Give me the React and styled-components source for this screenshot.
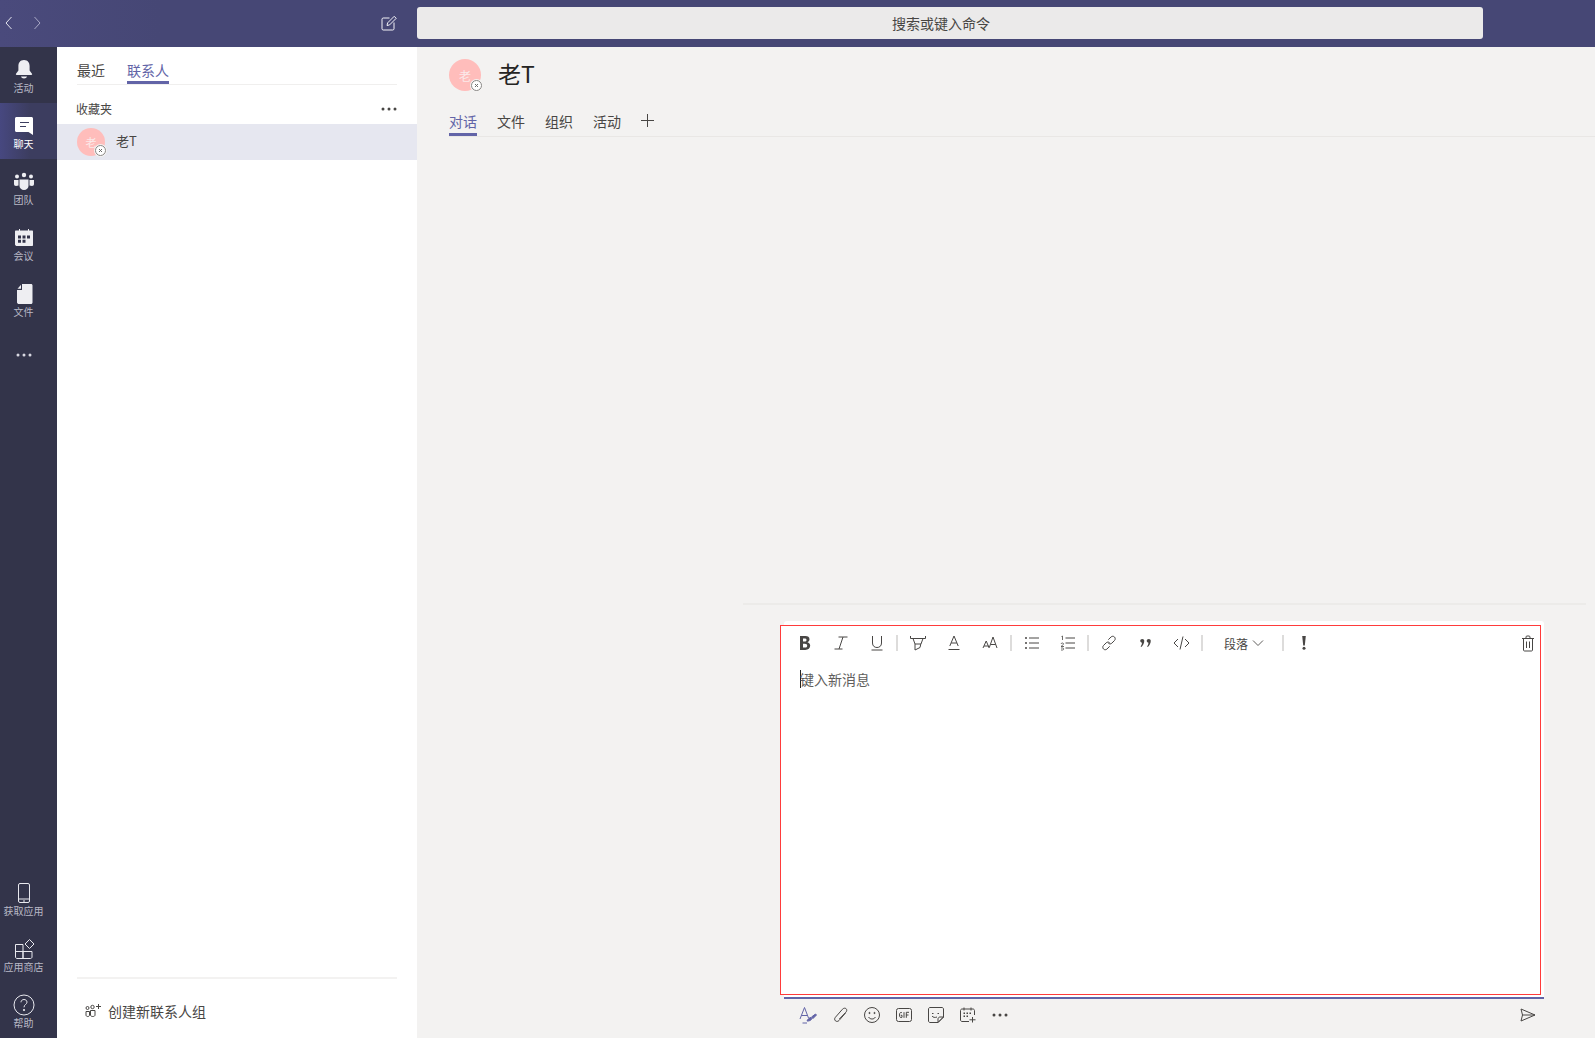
import React from "react";
import styled, { createGlobalStyle } from "styled-components";

const Global = createGlobalStyle`
  html, body { margin: 0; padding: 0; height: 100%; overflow: hidden; }
  body {
    font-family: "Noto Sans CJK SC", "Liberation Sans", sans-serif;
    color: #484644;
  }
  * { box-sizing: border-box; }
`;

const Shell = styled.div`
  width: 1595px;
  height: 1038px;
  display: grid;
  grid-template-columns: 57px 360px 1fr;
  grid-template-rows: 47px 1fr;
  background: #f3f2f1;
`;

const TitleBar = styled.header`
  grid-column: 1 / 4;
  display: flex;
  align-items: center;
  padding-bottom: 1px;
  background: linear-gradient(90deg, #4a4a7c 0, #464775 160px);
`;

const NavArrows = styled.div`
  width: 377px;
  display: flex;
  align-items: center;
  padding-left: 4px;
  gap: 18px;
`;

const ComposeSlot = styled.div`
  width: 40px;
  display: flex;
  justify-content: flex-start;
  padding-left: 4px;
`;

const SearchBox = styled.div`
  width: 1066px;
  height: 32px;
  padding-right: 18px;
  border-radius: 3px;
  background: #ebeaea;
  display: flex;
  align-items: center;
  justify-content: center;
  font-size: 14px;
  color: #484644;
`;

const Rail = styled.nav`
  background: #33344a;
  display: flex;
  flex-direction: column;
  justify-content: space-between;
`;

const RailGroup = styled.div`
  display: flex;
  flex-direction: column;
`;

const RailItem = styled.div`
  height: 56px;
  display: flex;
  flex-direction: column;
  align-items: center;
  padding: 12px 10px 0 0;
  color: ${(p) => (p.$active ? "#ffffff" : "#b9b9c6")};
  background: ${(p) => (p.$active ? "linear-gradient(90deg, #474880 0, #3c3d5f 30px)" : "transparent")};
  font-size: 10px;
  line-height: 14px;
  white-space: nowrap;
  svg { display: block; flex: none; }
`;

const RailMore = styled(RailItem)`
  justify-content: center;
  padding-top: 0;
`;

const ListPanel = styled.aside`
  background: #ffffff;
  display: flex;
  flex-direction: column;
`;

const PanelTabs = styled.div`
  margin: 0 20px;
  height: 38px;
  display: flex;
  gap: 22px;
  border-bottom: 1px solid #f0efee;
`;

const PanelTab = styled.div`
  height: 37px;
  padding-top: 13px;
  font-size: 14px;
  line-height: 20px;
  color: ${(p) => (p.$active ? "#6264a7" : "#484644")};
  border-bottom: 3px solid ${(p) => (p.$active ? "#6264a7" : "transparent")};
`;

const SectionHead = styled.div`
  height: 39px;
  padding: 8px 20px 0 19px;
  display: flex;
  align-items: center;
  justify-content: space-between;
  font-size: 12px;
  color: #484644;
`;

const ContactRow = styled.div`
  height: 36px;
  padding-left: 20px;
  display: flex;
  align-items: center;
  gap: 11px;
  background: #e6e7f0;
  font-size: 13px;
  line-height: 18px;
  color: #484644;
`;

const ContactName = styled.span`
  margin-top: -2px;
`;

const Avatar = styled.div`
  position: relative;
  flex: none;
  width: ${(p) => p.$size}px;
  height: ${(p) => p.$size}px;
  border-radius: 50%;
  background: #ffbdbb;
  color: #fbeaea;
  font-size: ${(p) => (p.$size > 30 ? 12 : 11)}px;
  display: flex;
  align-items: center;
  justify-content: center;
`;

const StatusBadge = styled.svg`
  position: absolute;
  right: -2px;
  bottom: -1px;
  width: 13px;
  height: 13px;
`;

const PanelFill = styled.div`
  flex: 1;
`;

const PanelFooter = styled.div`
  margin: 0 20px;
  height: 61px;
  border-top: 2px solid #f3f2f1;
  padding: 4px 0 0 8px;
  display: flex;
  align-items: center;
  gap: 6px;
  font-size: 14px;
  color: #484644;
`;

const Main = styled.main`
  display: flex;
  flex-direction: column;
  min-width: 0;
`;

const ChatHead = styled.div`
  margin-left: 32px;
  height: 90px;
  border-bottom: 1px solid #e9e7e5;
  display: flex;
  flex-direction: column;
`;

const ChatTitle = styled.div`
  height: 58px;
  padding-top: 12px;
  display: flex;
  align-items: flex-start;
  gap: 17px;
`;

const ChatName = styled.div`
  font-size: 23px;
  line-height: 29px;
  color: #252423;
`;

const ChatTabs = styled.div`
  height: 31px;
  display: flex;
  gap: 20px;
  align-items: flex-start;
`;

const ChatTab = styled.div`
  height: 31px;
  padding-top: 6px;
  font-size: 14px;
  line-height: 20px;
  color: ${(p) => (p.$active ? "#6264a7" : "#484644")};
  border-bottom: 3px solid ${(p) => (p.$active ? "#6264a7" : "transparent")};
`;

const AddTab = styled.svg`
  margin: 8px 0 0 -1px;
  width: 15px;
  height: 15px;
`;

const ChatBody = styled.div`
  flex: 1;
`;

const Composer = styled.section`
  margin: 0 9px 0 326px;
  border-top: 2px solid #ecebe9;
  padding: 16px 42px 0 41px;
`;

const Editor = styled.div`
  position: relative;
  height: 378px;
  background: #ffffff;
  border-radius: 3px 3px 0 0;
  border-bottom: 2px solid #6264a7;
`;

const RedFrame = styled.div`
  position: absolute;
  top: 4px;
  left: -4px;
  right: 3px;
  bottom: 2px;
  border: 1px solid #ff3b3b;
  background: #ffffff;
`;

const FormatBar = styled.div`
  position: relative;
  height: 44px;
  padding-left: 3px;
  display: flex;
  align-items: center;
`;

const ToolBtn = styled.div`
  flex: none;
  width: ${(p) => p.$w || 36}px;
  height: 24px;
  display: flex;
  align-items: center;
  justify-content: center;
  color: #484644;
`;

const TrashBtn = styled(ToolBtn)`
  margin-left: auto;
  width: 32px;
`;

const Sep = styled.div`
  flex: none;
  width: 2px;
  height: 16px;
  margin: 0 2px;
  background: #dddcdb;
`;

const ParaSelect = styled(ToolBtn)`
  width: 75px;
  padding-left: 3px;
  font-size: 12px;
  gap: 4px;
`;

const Draft = styled.div`
  position: relative;
  margin: 5px 0 0 16px;
  height: 18px;
  font-size: 14px;
  line-height: 18px;
  text-indent: -1px;
  color: #605e5c;
  border-left: 1px solid #252423;
`;

const SendBar = styled.div`
  height: 39px;
  padding-left: 8px;
  display: flex;
  align-items: center;
  padding-bottom: 8px;
`;

const SendBtn = styled(ToolBtn)`
  width: 32px;
`;

const SendLast = styled(SendBtn)`
  margin-left: auto;
`;

const Line = ({ children, w = 16, h = 16, vb, sw = 1, color = "currentColor" }) => (
  <svg width={w} height={h} viewBox={vb || `0 0 ${w} ${h}`} fill="none" stroke={color} strokeWidth={sw}>
    {children}
  </svg>
);

const Dots = ({ color = "#484644", r = 1.5 }) => (
  <svg width="16" height="4" viewBox="0 0 16 4" fill={color}>
    <circle cx="2" cy="2" r={r} />
    <circle cx="8" cy="2" r={r} />
    <circle cx="14" cy="2" r={r} />
  </svg>
);

const Badge = () => (
  <StatusBadge viewBox="0 0 13 13">
    <circle cx="6.5" cy="6.5" r="6.5" fill="#f3f2f1" />
    <circle cx="6.5" cy="6.5" r="5" fill="#fff" stroke="#8a8886" strokeWidth="1" />
    <path d="M5 5l3 3M8 5l-3 3" stroke="#6e6d6c" strokeWidth="1" />
  </StatusBadge>
);

const railTop = [
  {
    label: "活动",
    icon: (
      <svg width="20" height="22" viewBox="0 0 20 22" fill="#eeeef2">
        <path d="M10 1c-4 0-5.6 3-5.6 6v4.5L2 14.8c-.4.6 0 1.2.6 1.2h14.8c.6 0 1-.6.6-1.2l-2.4-3.3V7c0-3-1.6-6-5.6-6z" />
        <path d="M7 17.5h6c-.3 1.3-1.5 2-3 2s-2.7-.7-3-2z" />
      </svg>
    ),
  },
  {
    label: "聊天",
    active: true,
    icon: (
      <svg width="20" height="22" viewBox="0 0 20 22">
        <path d="M1 3.5C1 2.7 1.7 2 2.500 2h15c.8 0 1.500.7 1.500 1.500V20l-4.500-3H2.500C1.700 17 1 16.300 1 15.500z" fill="#ffffff" />
        <path d="M6 7.500h9M6 11.500h6" stroke="#3c3d5f" strokeWidth="1.200" />
      </svg>
    ),
  },
  {
    label: "团队",
    icon: (
      <svg width="22" height="22" viewBox="0 0 22 22" fill="#eeeef2">
        <circle cx="4" cy="5.500" r="2" />
        <circle cx="11" cy="4" r="2.200" />
        <circle cx="18" cy="5.500" r="2" />
        <path d="M1 9h4.500v5.500L3 15c-1.300 0-2-1-2-2zM16.500 9H21v4c0 1-.7 2-2 2l-2.500-.5z" />
        <path d="M6.500 8.500h9v6.500c0 2.200-2 4-4.500 4s-4.500-1.800-4.500-4z" />
      </svg>
    ),
  },
  {
    label: "会议",
    icon: (
      <svg width="20" height="22" viewBox="0 0 20 22">
        <path d="M2 3.500h16c.6 0 1 .4 1 1V18c0 .6-.4 1-1 1H3c-1 0-2-.6-2-1.500v-13c0-.6.400-1 1-1z" fill="#eeeef2" />
        <path d="M5.500 2v2M14.500 2v2" stroke="#eeeef2" strokeWidth="1" />
        <path d="M4 8.500h3v3H4zM8.500 8.500h3v3h-3zM13 8.500h3v3h-3zM4 12.700h3v3H4zM8.500 12.700h3v3h-3z" fill="#33344a" />
      </svg>
    ),
  },
  {
    label: "文件",
    icon: (
      <svg width="20" height="22" viewBox="0 0 20 22" fill="#eeeef2">
        <path d="M8 1h9c1 0 1.500.7 1.500 1.500v17c0 .8-.6 1.500-1.500 1.500H5c-1 0-2-.7-2-1.500V7h5z" />
        <path d="M3.500 5.800 7 1.800v4z" />
      </svg>
    ),
  },
];

const railBottom = [
  {
    label: "获取应用",
    icon: (
      <svg width="20" height="22" viewBox="0 0 20 22" fill="none" stroke="#e8e8ee" strokeWidth="1">
        <rect x="4.500" y="1.500" width="11" height="19" rx="1.500" />
        <path d="M4.500 17h11M9 19h2" />
      </svg>
    ),
  },
  {
    label: "应用商店",
    icon: (
      <svg width="22" height="22" viewBox="0 0 22 22" fill="none" stroke="#e8e8ee" strokeWidth="1">
        <path d="M2.500 6.500h7.500v14H4c-.8 0-1.500-.7-1.500-1.500zM10 13.500h9V19c0 .8-.7 1.500-1.500 1.500H10zM2.500 13.500H10" />
        <path d="M16.500 1.500l4.500 4.500-4.500 4.500L12 6z" />
      </svg>
    ),
  },
  {
    label: "帮助",
    icon: (
      <svg width="22" height="22" viewBox="0 0 22 22" fill="none" stroke="#e8e8ee" strokeWidth="1">
        <circle cx="11" cy="11" r="10" />
        <path d="M8 8.300c0-1.700 1.300-2.800 3-2.800s3 1.100 3 2.600c0 2.400-3 2.300-3 5.200" />
        <circle cx="11" cy="16" r=".7" fill="#e8e8ee" />
      </svg>
    ),
  },
];

const App = () => (
  <>
    <Global />
    <Shell>
      <TitleBar>
        <NavArrows>
          <Line w={10} h={16}>
            <path d="M7.500 2 2 8l5.500 6" stroke="#e4e4ee" />
          </Line>
          <Line w={10} h={16}>
            <path d="M2.500 2 8 8l-5.500 6" stroke="#a9a9c6" />
          </Line>
        </NavArrows>
        <ComposeSlot>
          <Line w={16} h={16}>
            <path d="M8.500 3H2.200C1.500 3 1 3.500 1 4.200v9.600c0 .7.500 1.200 1.200 1.200h9.600c.7 0 1.200-.5 1.200-1.200V7.500" stroke="#f3f3f8" />
            <path d="M6 10.500l.6-2.600L13.200 1.300l2 2-6.600 6.600z" stroke="#f3f3f8" />
          </Line>
        </ComposeSlot>
        <SearchBox>搜索或键入命令</SearchBox>
      </TitleBar>

      <Rail>
        <RailGroup>
          {railTop.map((item) => (
            <RailItem key={item.label} $active={item.active}>
              {item.icon}
              {item.label}
            </RailItem>
          ))}
          <RailMore>
            <Dots color="#d8d8e2" r={1.500} />
          </RailMore>
        </RailGroup>
        <RailGroup>
          {railBottom.map((item) => (
            <RailItem key={item.label}>
              {item.icon}
              {item.label}
            </RailItem>
          ))}
        </RailGroup>
      </Rail>

      <ListPanel>
        <PanelTabs>
          <PanelTab>最近</PanelTab>
          <PanelTab $active>联系人</PanelTab>
        </PanelTabs>
        <SectionHead>
          收藏夹
          <Dots />
        </SectionHead>
        <ContactRow>
          <Avatar $size={28}>
            老
            <Badge />
          </Avatar>
          <ContactName>老T</ContactName>
        </ContactRow>
        <PanelFill />
        <PanelFooter>
          <Line w={17} h={15}>
            <circle cx="2.500" cy="5" r="1.500" stroke="#484644" />
            <circle cx="7.500" cy="4" r="1.700" stroke="#484644" />
            <path d="M1 8.500h3.500v3.500c0 1-.7 1.500-1.700 1.500S1 13 1 12zM5.500 7.500H10v4.500c0 1-.9 1.500-2.200 1.500S5.500 13 5.500 12z" stroke="#484644" />
            <path d="M13.500 1v5M11 3.500h5" stroke="#484644" />
          </Line>
          创建新联系人组
        </PanelFooter>
      </ListPanel>

      <Main>
        <ChatHead>
          <ChatTitle>
            <Avatar $size={32}>
              老
              <Badge />
            </Avatar>
            <ChatName>老T</ChatName>
          </ChatTitle>
          <ChatTabs>
            <ChatTab $active>对话</ChatTab>
            <ChatTab>文件</ChatTab>
            <ChatTab>组织</ChatTab>
            <ChatTab>活动</ChatTab>
            <AddTab viewBox="0 0 15 15" fill="none" stroke="#484644">
              <path d="M7.500 1v13M1 7.500h13" />
            </AddTab>
          </ChatTabs>
        </ChatHead>
        <ChatBody />
        <Composer>
          <Editor>
            <RedFrame />
            <FormatBar>
              <ToolBtn>
                <svg width="14" height="16" viewBox="0 0 14 16" fill="#484644">
                  <path fillRule="evenodd" d="M2 1h5.500c2.400 0 4 1.200 4 3.200 0 1.400-.8 2.500-2.100 3 1.700.4 2.800 1.600 2.800 3.400 0 2.600-2 4.400-4.900 4.400H2zm3 2.400v3.100h1.700c1.100 0 1.800-.6 1.800-1.600 0-1-.7-1.500-1.800-1.500zm0 5.400v3.800h2c1.300 0 2.200-.7 2.200-1.900 0-1.200-.9-1.900-2.300-1.900z" />
                </svg>
              </ToolBtn>
              <ToolBtn>
                <Line>
                  <path d="M5.500 2h9M1.500 14h8M10 2 6 14" />
                </Line>
              </ToolBtn>
              <ToolBtn $w={35}>
                <Line>
                  <path d="M3.500 1v7c0 3 2 4.500 4.500 4.500s4.500-1.500 4.500-4.500V1M2.500 15h11" />
                </Line>
              </ToolBtn>
              <Sep />
              <ToolBtn>
                <Line w={18} h={16}>
                  <path d="M1.500 1v2.500h15V1M4 3.500 6 9h6l2-5.500M6 9v6l5-2.500.8-3.500" />
                </Line>
              </ToolBtn>
              <ToolBtn>
                <Line>
                  <path d="M3.800 11 8 1l4.200 10M5.200 8h5.600M2.500 14.500h11" />
                </Line>
              </ToolBtn>
              <ToolBtn>
                <Line>
                  <path d="M1 13 4.200 6l3 7M2 11h4.400M7.300 12.500 11 2l4 11M8.800 9.500h4.900" />
                </Line>
              </ToolBtn>
              <Sep />
              <ToolBtn>
                <Line>
                  <path d="M5 3h10M5 8h10M5 13h10" />
                  <path d="M1 3h2M1 8h2M1 13h2" strokeWidth="1.500" />
                </Line>
              </ToolBtn>
              <ToolBtn $w={35}>
                <Line>
                  <path d="M5.500 3H15M5.500 8H15M5.500 13H15" />
                  <path d="M1.500 1.500 2.500 1v4M1 9c.3-1.500 3-1.200 2.500.3L1 11.500h3M1 13h1.800c1.200 0 1.200 2-.2 2H1" strokeWidth=".8" />
                </Line>
              </ToolBtn>
              <Sep />
              <ToolBtn>
                <Line>
                  <path d="M7.300 4.700 10 2c1-1 2.600-1 3.500 0s1 2.500 0 3.500L10.800 8.200c-1 1-2.500 1-3.500 0" />
                  <path d="M8.700 11.300 6 14c-1 1-2.600 1-3.500 0s-1-2.500 0-3.500l2.700-2.700c1-1 2.500-1 3.500 0" />
                </Line>
              </ToolBtn>
              <ToolBtn>
                <svg width="13" height="10" viewBox="0 0 16 12" fill="#484644">
                  <path d="M4 1c1.500 0 2.500 1 2.500 2.300 0 3.200-2 6.400-3.700 7.700l-.8-.6C3 9 3.600 7.500 3.700 5.700 2.400 5.700 1.500 4.500 1.500 3.300 1.500 2 2.500 1 4 1z" />
                  <path d="M12 1c1.500 0 2.500 1 2.500 2.300 0 3.200-2 6.400-3.700 7.700l-.8-.6c1-1.400 1.600-2.900 1.700-4.700-1.300 0-2.200-1.200-2.200-2.400C9.500 2 10.500 1 12 1z" />
                </svg>
              </ToolBtn>
              <ToolBtn>
                <Line w={17} h={16}>
                  <path d="M5 4 1 8l4 4M12 4l4 4-4 4M10 1.500 7 14.500" />
                </Line>
              </ToolBtn>
              <Sep />
              <ParaSelect>
                段落
                <Line w={12} h={8}>
                  <path d="M1 1.500 6 6.500l5-5" stroke="#605e5c" />
                </Line>
              </ParaSelect>
              <Sep />
              <ToolBtn>
                <svg width="6" height="16" viewBox="0 0 6 16" fill="#484644">
                  <path d="M1.200 1h3.600L3.800 10.500H2.200z" />
                  <circle cx="3" cy="13.300" r="1.500" />
                </svg>
              </ToolBtn>
              <TrashBtn>
                <Line w={14} h={17}>
                  <path d="M1 3.500h12M5 3.500V2c0-.6.400-1 1-1h2c.6 0 1 .4 1 1v1.500M2.500 3.500V15c0 .6.400 1 1 1h7c.6 0 1-.4 1-1V3.500M5.500 6.500v6.500M8.500 6.500v6.500" />
                </Line>
              </TrashBtn>
            </FormatBar>
            <Draft>键入新消息</Draft>
          </Editor>
          <SendBar>
            <SendBtn>
              <svg width="18" height="18" viewBox="0 0 18 18" fill="none" stroke="#6264a7">
                <path d="M1 13 5.500 1.500 9.500 12M2.500 9.500h5.500" />
                <path d="M8 15c.8-2 2.500-3.500 4-3.500l1 1c-.6 1.600-2.500 2.800-5 2.500zM12.500 11l4-3 1 1-3.500 3.500zM3.500 17H8" fill="#6264a7" />
              </svg>
            </SendBtn>
            <SendBtn>
              <Line w={16} h={18}>
                <path d="M13.500 7 7 14.500c-1 1.100-2.600 1.200-3.600.3s-1-2.400 0-3.500l7-8c1.200-1.300 2.800-1.400 3.700-.6s.9 2.300-.2 3.500L7.300 13" />
              </Line>
            </SendBtn>
            <SendBtn>
              <Line>
                <circle cx="8" cy="8" r="7.500" />
                <circle cx="5.500" cy="6" r=".6" fill="currentColor" />
                <circle cx="10.500" cy="6" r=".6" fill="currentColor" />
                <path d="M4.500 10c1 1.500 2.200 2 3.500 2s2.500-.5 3.500-2" />
              </Line>
            </SendBtn>
            <SendBtn>
              <svg width="16" height="16" viewBox="0 0 16 16" fill="none" stroke="#484644">
                <rect x=".5" y="1.500" width="15" height="13" rx="2" />
                <path d="M6 5.800C5 5 3.500 5.300 3.500 8c0 2.700 1.500 3 2.500 2.300V8.300H4.800M8 5.200v5.600M13 5.300h-2.700v5.500M10.300 8H12.500" strokeWidth="1" />
              </svg>
            </SendBtn>
            <SendBtn>
              <Line>
                <path d="M15.500 10V2c0-.8-.7-1.500-1.500-1.500H2C1.200.5.500 1.200.500 2v12c0 .8.700 1.500 1.500 1.500h8z" />
                <path d="M10 15.500V12c0-1 .9-2 2-2h3.500zM4 6.500h1.500M9.500 6.500H11M4 9c1 1.500 3 1.800 5 1" />
              </Line>
            </SendBtn>
            <SendBtn>
              <Line>
                <path d="M9 14.500H2c-.8 0-1.500-.7-1.500-1.500V3.500C.5 2.700 1.200 2 2 2h11c.8 0 1.500.7 1.500 1.500V8" />
                <path d="M4 .5v3M11 .5v3M12.500 10v5.500M9.500 12.800h6" />
                <path d="M3.500 5.500h1.500V7H3.500zM6.500 5.500H8V7H6.500zM9.500 5.500H11V7H9.500zM3.500 8.500h1.500V10H3.500zM6.500 8.500H8V10H6.500z" fill="currentColor" stroke="none" />
              </Line>
            </SendBtn>
            <SendBtn>
              <Dots />
            </SendBtn>
            <SendLast>
              <Line w={16} h={14}>
                <path d="M1 1 15 7 1 13l1.500-6zM2.500 7H15" />
              </Line>
            </SendLast>
          </SendBar>
        </Composer>
      </Main>
    </Shell>
  </>
);

export default App;
